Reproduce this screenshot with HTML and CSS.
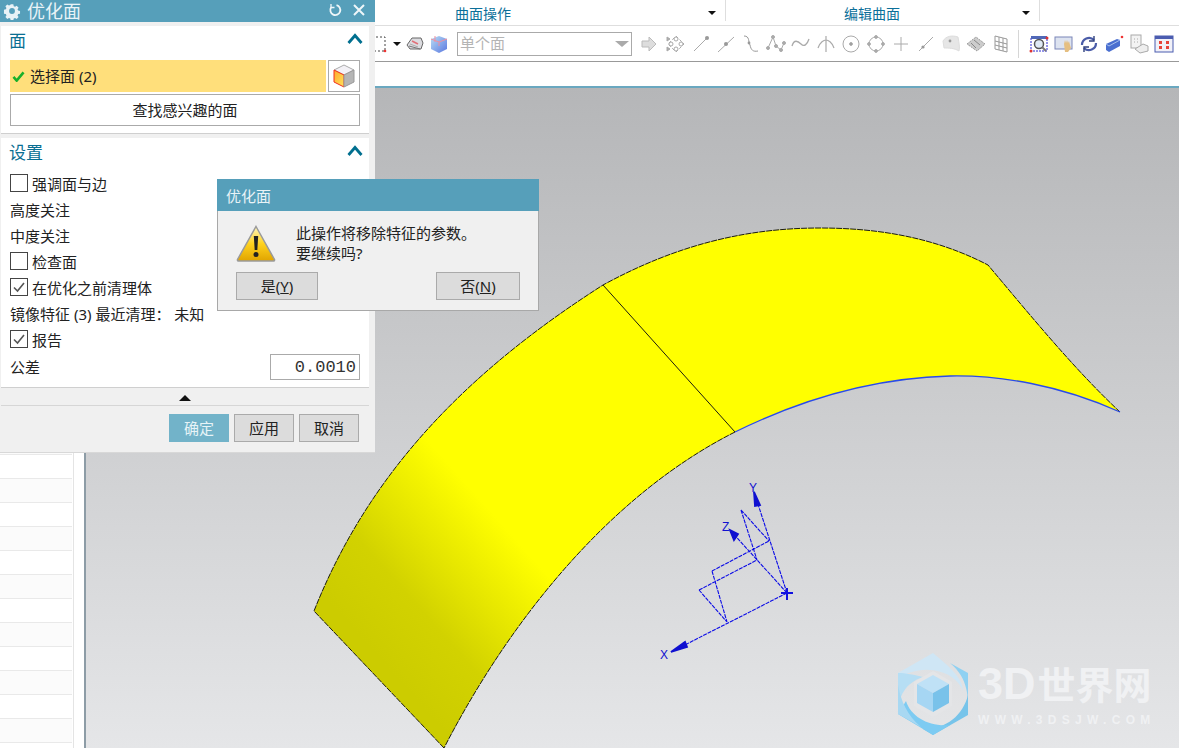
FILE: index.html
```html
<!DOCTYPE html>
<html lang="zh-CN">
<head>
<meta charset="utf-8">
<title>优化面</title>
<link rel="stylesheet" href="styles.css">
</head>
<body>
<div class="app">
  <header class="ribbon">
    <div class="tabs">
      <div class="group group-a"><span class="group-label">曲面操作</span><i class="caret"></i></div>
      <div class="group group-b"><span class="group-label">编辑曲面</span><i class="caret"></i></div>
    </div>
    <div class="tools">
      <svg class="ti" viewBox="0 0 20 20"><rect x="4" y="3" width="13" height="14" fill="none" stroke="#444" stroke-dasharray="2 2"/><circle cx="17" cy="17" r="1.3" fill="#e33"/></svg>
      <i class="caret tool-caret"></i>
      <svg class="ti ti-a" viewBox="0 0 20 20"><path d="M2 11 7 4h9l2 5-2 6H5z" fill="#dcdce0" stroke="#666"/><path d="M7 7l6 3" stroke="#e07078" stroke-width="1.600"/><path d="M4 12l11 3" stroke="#777"/><path d="M5 10l8 3" stroke="#aaa"/></svg>
      <svg class="ti ti-b" viewBox="0 0 20 20"><defs><linearGradient id="cb" x1="0" y1="0" x2="1" y2="1"><stop offset="0" stop-color="#b9ddf5"/><stop offset="1" stop-color="#5a78e0"/></linearGradient></defs><path d="M2 5l8-3 8 3v10l-8 4-8-4z" fill="url(#cb)"/><path d="M2 5l8 3 8-3M10 8v4M6 2v6" fill="none" stroke="#ef8fa0"/></svg>
      <div class="combo"><span>单个面</span><i class="caret caret-big"></i></div>
      <svg class="ti ti-c" viewBox="0 0 20 20"><path d="M3 7h7V3l7 7-7 7v-4H3z" fill="#ddd" stroke="#bbb"/></svg>
      <svg class="ti ti-d" viewBox="0 0 20 20" fill="none" stroke="#aaa"><path d="M10 2l8 8-8 8-8-8z" stroke-dasharray="3 2"/><circle cx="10" cy="5" r="2"/><circle cx="15" cy="10" r="2"/><circle cx="10" cy="15" r="2"/><circle cx="5" cy="10" r="2"/><path d="M1 3v4l3-2zM1 13v4l3-2z" fill="#aaa"/></svg>
      <svg class="ti" viewBox="0 0 20 20"><path d="M3 17 16 4" stroke="#aaa" fill="none"/><circle cx="16" cy="4" r="2" fill="#999"/></svg>
      <svg class="ti" viewBox="0 0 20 20"><path d="M2 18 18 3" stroke="#aaa" fill="none"/><circle cx="10" cy="10" r="2" fill="#999"/></svg>
      <svg class="ti" viewBox="0 0 20 20"><path d="M3 2c6 0 4 6 6 9 1 5 3 7 8 6" stroke="#999" fill="none"/><circle cx="8" cy="9" r="1.400" fill="#999"/></svg>
      <svg class="ti" viewBox="0 0 20 20" fill="none" stroke="#aaa"><path d="M2 14 7 3l3 9 5 4 3-7"/><circle cx="7" cy="3" r="1.500" fill="#aaa"/><circle cx="2" cy="14" r="1.500" fill="#aaa"/><circle cx="10" cy="12" r="1.500" fill="#aaa"/><circle cx="15" cy="16" r="1.500" fill="#aaa"/><circle cx="18" cy="9" r="1.500" fill="#aaa"/></svg>
      <svg class="ti" viewBox="0 0 20 20" fill="none" stroke="#aaa"><path d="M1 12c2-7 6-5 9-2s6 1 8-5" stroke-width="1.300"/></svg>
      <svg class="ti" viewBox="0 0 20 20" fill="none" stroke="#aaa"><path d="M2 14C4 8 8 6 10 6s6 2 8 8M10 2v16" stroke-width="1.200"/></svg>
      <svg class="ti" viewBox="0 0 20 20" fill="none" stroke="#aaa"><circle cx="10" cy="10" r="8"/><circle cx="10" cy="10" r="1.400" fill="#999"/></svg>
      <svg class="ti" viewBox="0 0 20 20" fill="none" stroke="#aaa"><circle cx="10" cy="10" r="7"/><circle cx="10" cy="3" r="1.400" fill="#aaa"/><circle cx="10" cy="17" r="1.400" fill="#aaa"/><circle cx="3" cy="10" r="1.400" fill="#aaa"/><circle cx="17" cy="10" r="1.400" fill="#aaa"/></svg>
      <svg class="ti" viewBox="0 0 20 20"><path d="M10 3v14M3 10h14" stroke="#aaa" fill="none"/></svg>
      <svg class="ti" viewBox="0 0 20 20"><path d="M3 17 17 3" stroke="#aaa" fill="none"/><circle cx="7" cy="13" r="1.600" fill="#999"/></svg>
      <svg class="ti" viewBox="0 0 20 20"><path d="M2 7c3-5 9-6 15-4 1 6 2 10 1 14-5-3-10-3-15-3z" fill="#e6e6e6" stroke="#ddd"/><circle cx="9" cy="7" r="1.400" fill="#999"/></svg>
      <svg class="ti" viewBox="0 0 20 20"><path d="M1 10 10 3l9 7-8 7z" fill="#ccc" stroke="#999" stroke-dasharray="2 1"/><path d="M5 9l5 5M8 6l6 5" stroke="#888"/></svg>
      <svg class="ti" viewBox="0 0 20 20" fill="none" stroke="#999"><path d="M4 2l12 3v13L4 15zM8 3v13M12 4v13M4 7l12 3M4 11l12 3"/></svg>
      <span class="tool-sep"></span>
      <svg class="ti ti-e" viewBox="0 0 20 20"><rect x="2" y="3" width="16" height="14" fill="#fff" stroke="#2a2ad0" stroke-dasharray="2 1"/><rect x="2" y="2" width="16" height="3" fill="#5068b8"/><circle cx="10" cy="10" r="4.500" fill="#dfeaf5" stroke="#555" stroke-width="1.500"/><path d="M13 13l4 4" stroke="#777" stroke-width="2"/><circle cx="18" cy="4" r="1.500" fill="#d33"/><circle cx="2" cy="17" r="1.500" fill="#d33"/></svg>
      <svg class="ti" viewBox="0 0 20 20"><rect x="1" y="3" width="17" height="12" fill="#dde3f0" stroke="#7b86b8"/><path d="M10 10l1-4 1 3 1-3 1 3 1-2 1 4 1 3-3 4h-3z" fill="#e5bf82"/></svg>
      <svg class="ti" viewBox="0 0 20 20" fill="none" stroke-width="2.200"><path d="M3 11a7 7 0 0 1 12-5" stroke="#4a5ca8"/><path d="M17 9a7 7 0 0 1-12 5" stroke="#4a5ca8"/><path d="M15 2v5h-5" stroke="#30407f" stroke-width="1.400"/><path d="M5 18v-5h5" stroke="#30407f" stroke-width="1.400"/></svg>
      <svg class="ti" viewBox="0 0 20 20"><path d="M2 10l11-5 3 1v6L5 18l-3-2z" fill="#4a6fd0"/><path d="M2 10l3 2 11-6" fill="none" stroke="#a7c0ee"/><circle cx="18" cy="3" r="1.300" fill="#e33"/></svg>
      <svg class="ti" viewBox="0 0 20 20" fill="none" stroke="#aaa"><rect x="2" y="1" width="10" height="13" fill="#f3f3f3"/><path d="M5 5h1M8 5h1M5 8h1M8 8h1"/><path d="M6 15l8-5 5 2v5l-8 2z" fill="#eee"/></svg>
      <svg class="ti" viewBox="0 0 20 20"><rect x="1" y="2" width="18" height="16" fill="#f1f1f8" stroke="#4b5cb0"/><rect x="1" y="2" width="18" height="3" fill="#4b5cb0"/><path d="M5 7h3v3H5zM12 7h3v3h-3zM5 12h3v3H5zM12 12h3v3h-3z" fill="#e8433a"/></svg>
    </div>
    <div class="subbar"></div>
  </header>

  <main class="workspace">
    <aside class="sidebar">
      <div class="list">
        <div class="list-row"></div><div class="list-row"></div><div class="list-row"></div><div class="list-row"></div><div class="list-row"></div><div class="list-row"></div><div class="list-row"></div><div class="list-row"></div><div class="list-row"></div><div class="list-row"></div><div class="list-row"></div><div class="list-row"></div><div class="list-row"></div><div class="list-row"></div><div class="list-row"></div><div class="list-row"></div><div class="list-row"></div><div class="list-row"></div><div class="list-row"></div><div class="list-row"></div><div class="list-row"></div><div class="list-row"></div><div class="list-row"></div><div class="list-row"></div><div class="list-row"></div><div class="list-row"></div><div class="list-row"></div><div class="list-row"></div>
      </div>
    </aside>
    <section class="canvas">
      <svg class="scene" viewBox="86 88 1093 660">
        <defs>
          <linearGradient id="shade" gradientUnits="userSpaceOnUse" x1="350" y1="625" x2="485" y2="505">
            <stop offset="0" stop-color="#cccc00"/>
            <stop offset="0.35" stop-color="#d2d200"/>
            <stop offset="1" stop-color="#ffff00"/>
          </linearGradient>
        </defs>
        <path d="M314 611C370 470 470 370 603 285C680 243 750 228 820 228C885 228 940 240 988 265C1030 315 1075 370 1120 412C1060 385 1000 375 950 376C870 378 800 400 735 432C610 495 510 620 444 748L314 611Z" fill="url(#shade)"/>
        <path d="M444 748 314 611C370 470 470 370 603 285C680 243 750 228 820 228C885 228 940 240 988 265C1030 315 1075 370 1120 412M735 432C610 495 510 620 444 748" fill="none" stroke="#1c1c10" stroke-width="1" stroke-dasharray="6 1"/>
        <path d="M603 285 735 432" fill="none" stroke="#1c1c10" stroke-width="1"/>
        <path d="M1120 412C1060 385 1000 375 950 376C870 378 800 400 735 432" fill="none" stroke="#2a4be8" stroke-width="1.300"/>
        <g fill="none" stroke="#0a0ae6" stroke-width="1.100" stroke-dasharray="4 1">
          <path d="M787 593 754 492M787 593 730 530M787 593 671 652"/>
          <path d="M699 590 727 622M699 590 757 560M712 571 727 622M712 571 769 541M741 510 769 541M741 510 757 560"/>
        </g>
        <path d="M754 492 760 505 755 506ZM730 530 738 534 734 540ZM671 652 685 642 687 647Z" fill="#1010d0" stroke="#1010d0" stroke-width="1.800"/>
        <path d="M781 593H793M787 588V600" stroke="#1010e0" stroke-width="2"/>
        <text class="axis" x="749" y="492">Y</text>
        <text class="axis" x="722" y="531">Z</text>
        <text class="axis" x="660" y="659">X</text>
      </svg>
      <div class="watermark">
        <svg class="wm-logo" viewBox="0 0 72 82">
          <path d="M36 0 1 20 1 26C12 18 28 14 44 19 54 22 62 28 66 38 66 24 50 12 36 0Z" fill="#cfe6f5"/>
          <path d="M53 10 71 20V61C71 44 72 26 53 10Z" fill="#8fd1f2"/>
          <path d="M71 42V62L36 82 26 76C50 76 66 62 71 42Z" fill="#77c4ea"/>
          <path d="M1 61 36 82 53 72C32 74 14 64 9 48Z" fill="#7dcbf2"/>
          <path d="M1 20V61C1 44 8 30 26 24 18 22 8 20 1 20Z" fill="#b6def4"/>
          <path d="M1 32V61L24 74C10 62 4 48 1 32Z" fill="#a8d8f2"/>
          <path d="M36 18 55 29V53L36 64 17 53V29Z" fill="#e4e5e7"/>
          <path d="M36 22 52 31 36 40 20 31Z" fill="#bfe1f6"/>
          <path d="M20 31 36 40V59L20 50Z" fill="#a6d6f3"/>
          <path d="M52 31V50L36 59V40Z" fill="#79c2ea"/>
        </svg>
        <div class="wm-text">
          <div class="wm-name"><span class="wm-3d">3D</span>世界网</div>
          <div class="wm-url">WWW.3DSJW.COM</div>
        </div>
      </div>
    </section>
  </main>

  <div class="dialog">
    <div class="dlg-title">
      <svg class="gear" viewBox="0 0 16 16"><path d="M6.600 1h2.800l.4 2 1.400.6 1.700-1.100 2 2-1.100 1.700.6 1.400 2 .4v2.800l-2 .4-.6 1.400 1.100 1.700-2 2-1.700-1.100-1.400.6-.4 2H6.600l-.4-2-1.400-.6-1.700 1.100-2-2 1.100-1.700-.6-1.400-2-.4V6.600l2-.4.6-1.400-1.100-1.700 2-2 1.700 1.100 1.400-.6z" fill="#e8f2f6" transform="translate(1.200 1.200) scale(.85)"/><circle cx="8" cy="8" r="2.600" fill="#569fba"/></svg>
      <span class="dlg-title-text">优化面</span>
      <svg class="dlg-btn" viewBox="0 0 14 14" fill="none" stroke="#eef6f9" stroke-width="1.800"><path d="M8.500 2.200A5 5 0 1 1 3 4.500"/><path d="M3 1v3.500h3.500" stroke-width="1.300"/></svg>
      <svg class="dlg-btn" viewBox="0 0 14 14" fill="none" stroke="#eef6f9" stroke-width="2"><path d="M2 2l10 10M12 2 2 12"/></svg>
    </div>

    <section class="panel panel-face">
      <div class="panel-head"><span>面</span><svg class="chev" viewBox="0 0 16 11"><path d="M1.500 10 8 2.500l6.500 7.500" fill="none" stroke="#006f8f" stroke-width="2.800"/></svg></div>
      <div class="select-row">
        <div class="select-field">
          <svg class="tick" viewBox="0 0 14 12"><path d="M1.500 6.500 5 10.500 12.500 1.500" fill="none" stroke="#18b02a" stroke-width="2.800"/></svg>
          <span>选择面 (2)</span>
        </div>
        <button class="cube-btn">
          <svg viewBox="0 0 22 24"><defs><linearGradient id="cf" x1="0" y1="0" x2="1" y2="1"><stop offset="0" stop-color="#ffa92e"/><stop offset="1" stop-color="#ffe45a"/></linearGradient></defs><path d="M11 1 21 6 11 11 1 6Z" fill="#f3f1f6" stroke="#aaa"/><path d="M1 6 11 11V23L1 18Z" fill="url(#cf)" stroke="#f03020"/><path d="M21 6V18L11 23V11Z" fill="#b5b5b5" stroke="#999"/></svg>
        </button>
      </div>
      <button class="wide-btn">查找感兴趣的面</button>
    </section>

    <section class="panel panel-settings">
      <div class="panel-head"><span>设置</span><svg class="chev" viewBox="0 0 16 11"><path d="M1.500 10 8 2.500l6.500 7.500" fill="none" stroke="#006f8f" stroke-width="2.800"/></svg></div>
      <div class="row"><i class="check"></i><span>强调面与边</span></div>
      <div class="row">高度关注</div>
      <div class="row">中度关注</div>
      <div class="row"><i class="check"></i><span>检查面</span></div>
      <div class="row"><i class="check on"><svg viewBox="0 0 16 16"><path d="M3 8.500 6.500 12 13 4" fill="none" stroke="#555" stroke-width="1.600"/></svg></i><span>在优化之前清理体</span></div>
      <div class="row">镜像特征 (3) 最近清理：&nbsp;未知</div>
      <div class="row"><i class="check on"><svg viewBox="0 0 16 16"><path d="M3 8.500 6.500 12 13 4" fill="none" stroke="#555" stroke-width="1.600"/></svg></i><span>报告</span></div>
      <div class="row row-between"><span class="tol-label">公差</span><div class="num-input">0.0010</div></div>
    </section>

    <div class="collapse"><i class="caret caret-up"></i></div>
    <div class="actions">
      <button class="btn primary">确定</button>
      <button class="btn">应用</button>
      <button class="btn">取消</button>
    </div>
  </div>

  <div class="msgbox">
    <div class="msg-title">优化面</div>
    <div class="msg-body">
      <svg class="warn" viewBox="0 0 40 37">
        <defs><linearGradient id="wg" x1="0" y1="0" x2="0" y2="1"><stop offset="0" stop-color="#fff6c0"/><stop offset=".5" stop-color="#ffd21e"/><stop offset="1" stop-color="#e0a400"/></linearGradient></defs>
        <path d="M20 1.500 38.500 34.500Q39 36 37 36H3Q1 36 1.500 34.500Z" fill="url(#wg)" stroke="#9a9a9a" stroke-width="1.500"/>
        <path d="M17.800 11h4.400l-.9 14h-2.600z" fill="#222"/><circle cx="20" cy="29.500" r="2.500" fill="#222"/>
      </svg>
      <p class="msg-text">此操作将移除特征的参数。<br>要继续吗?</p>
    </div>
    <div class="msg-actions">
      <button class="btn msg-yes">是(<u>Y</u>)</button>
      <button class="btn msg-no">否(<u>N</u>)</button>
    </div>
  </div>
</div>
</body>
</html>
```

FILE: styles.css
```css
* { box-sizing: border-box; }
html, body { margin: 0; padding: 0; }
body {
  width: 1179px;
  height: 748px;
  overflow: hidden;
  font-family: "Noto Sans", "Noto Sans CJK SC", sans-serif;
  font-size: 15px;
  color: #222;
  background: #fff;
}
.app {
  position: relative;
  width: 1179px;
  height: 748px;
  display: flex;
  flex-direction: column;
  overflow: hidden;
}

/* ribbon */
.ribbon { flex: none; background: #fff; }
.tabs {
  height: 26px;
  display: flex;
  padding-left: 375px;
  border-bottom: 1px solid #dedede;
}
.group {
  height: 21px;
  display: flex;
  align-items: center;
  border-right: 1px solid #dedede;
  padding-right: 9px;
}
.group-a { width: 351px; padding-left: 80px; }
.group-b { width: 314px; padding-left: 118px; }
.group-label { color: #0b6f99; font-size: 14px; line-height: 21px; padding-top: 6px; }
.group .caret { margin-left: auto; margin-top: 5px; }
.caret {
  display: block;
  width: 0;
  height: 0;
  border-left: 4px solid transparent;
  border-right: 4px solid transparent;
  border-top: 4px solid #111;
}
.tools {
  height: 36px;
  display: flex;
  align-items: center;
  gap: 5px;
  padding-left: 368px;
  border-bottom: 1px solid #999;
}
.ti { flex: none; width: 20px; height: 20px; display: block; }
.tool-caret { margin-right: 2px; }
.ti-a { margin-left: -3px; }
.ti-b { margin-left: -1px; }
.ti-c { margin-left: 2px; }
.ti-d { margin-left: 2px; }
.ti-e { margin-left: 5px; }
.combo {
  flex: none;
  margin-left: 3px;
  width: 175px;
  height: 24px;
  border: 1px solid #aaa;
  display: flex;
  align-items: center;
  justify-content: space-between;
  padding: 0 2px 2px 2px;
  color: #b4b4b4;
  font-size: 15px;
}
.caret-big {
  border-left-width: 7px;
  border-right-width: 7px;
  border-top: 6px solid #aaa;
  margin-top: 2px;
}
.tool-sep {
  flex: none;
  width: 1px;
  height: 28px;
  margin-left: 2px;
  background: #d6d6d6;
}
.subbar {
  height: 26px;
  border-bottom: 2px solid #6aa8c0;
}

/* workspace */
.workspace { flex: 1; display: flex; min-height: 0; }
.sidebar {
  flex: none;
  width: 86px;
  padding: 7px 10px 0 0;
  background: #fff;
  border-right: 2px solid #8d9ca6;
  overflow: hidden;
}
.list { border-right: 1px solid #e4e4e4; padding-right: 1px; }
.list-row { height: 24px; border-bottom: 1px solid #e9e9e9; background: #fbfbfb; }
.list-row:nth-child(even) { background: #fff; }
.canvas {
  position: relative;
  flex: 1;
  background: linear-gradient(#b5b6b8, #e5e6e8);
  overflow: hidden;
}
.scene { display: block; width: 100%; height: 100%; }
.axis { font-family: "Liberation Sans", sans-serif; font-size: 12px; fill: #1010d0; }

/* watermark */
.watermark {
  position: absolute;
  left: 811px;
  top: 565px;
  display: flex;
  gap: 9px;
  align-items: flex-start;
}
.wm-logo { flex: none; width: 72px; height: 82px; display: block; }
.wm-text { padding-top: 8px; }
.wm-name {
  font-family: "Liberation Sans", "Noto Sans CJK SC", sans-serif;
  font-weight: 700;
  font-size: 38px;
  line-height: 46px;
  color: #f0f1f3;
  white-space: nowrap;
}
.wm-3d { font-size: 45px; margin-right: 2px; }
.wm-url {
  font-family: "Liberation Sans", sans-serif;
  font-weight: 700;
  font-size: 12px;
  line-height: 14px;
  margin-top: 4px;
  color: #f0f1f3;
  letter-spacing: 5.300px;
  white-space: nowrap;
}

/* dialog */
.dialog {
  position: absolute;
  left: 0;
  top: 0;
  width: 375px;
  height: 453px;
  background: #f0f0f0;
  border-bottom: 1px solid #d8d8d8;
  display: flex;
  flex-direction: column;
}
.dlg-title {
  flex: none;
  height: 22px;
  background: #569fba;
  display: flex;
  align-items: center;
  padding: 0 9px 0 3px;
  color: #e9f3f7;
}
.gear { width: 18px; height: 18px; margin-right: 6px; display: block; }
.dlg-title-text { font-size: 18px; line-height: 18px; margin-right: auto; }
.dlg-btn { width: 14px; height: 14px; margin-left: 10px; margin-top: -2px; display: block; }
.panel {
  margin: 4px 6px 0 1px;
  background: #fff;
  border-bottom: 1px solid #cfcfcf;
  padding: 0 9px;
}
.panel-face { height: 108px; }
.panel-settings { height: 250px; }
.panel-head {
  height: 30px;
  display: flex;
  align-items: center;
  justify-content: space-between;
  color: #0a6f93;
  font-size: 17px;
  padding-bottom: 4px;
  margin-left: -1px;
  margin-bottom: 4px;
}
.chev { width: 16px; height: 11px; display: block; margin-right: -3px; margin-top: -1px; }
.select-row { display: flex; gap: 2px; height: 32px; margin-bottom: 2px; }
.select-field {
  flex: 1;
  background: #ffdf7b;
  display: flex;
  align-items: center;
  gap: 5px;
  padding: 0 0 2px 2px;
}
.tick { width: 13px; height: 11px; display: block; margin-top: 2px; }
.cube-btn {
  flex: none;
  width: 32px;
  padding: 0;
  background: #fff;
  border: 1px solid #aaa;
  display: flex;
  align-items: center;
  justify-content: center;
}
.cube-btn svg { width: 22px; height: 24px; display: block; }
.wide-btn {
  display: block;
  width: 100%;
  height: 32px;
  background: #fff;
  border: 1px solid #aaa;
  font: inherit;
  color: #222;
  padding: 0 0 1px;
}
.row {
  height: 26px;
  display: flex;
  align-items: center;
  white-space: pre;
  padding-bottom: 4px;
}
.row-between { justify-content: space-between; padding-bottom: 0; }
.tol-label { padding-bottom: 2px; }
.check {
  flex: none;
  display: block;
  width: 18px;
  height: 18px;
  border: 1px solid #444;
  background: #fff;
  margin-right: 4px;
}
.check svg { display: block; width: 16px; height: 16px; }
.num-input {
  width: 90px;
  height: 26px;
  border: 1px solid #aaa;
  background: #fff;
  font-family: "Liberation Mono", monospace;
  font-size: 17px;
  line-height: 25px;
  text-align: right;
  padding: 0 3px 0 0;
  color: #333;
}
.collapse {
  flex: none;
  height: 18px;
  margin: 0 6px 0 1px;
  border-bottom: 1px solid #d6d6d6;
  display: flex;
  align-items: center;
  justify-content: center;
}
.caret-up {
  border-top: 0;
  border-left-width: 6px;
  border-right-width: 6px;
  border-bottom: 6px solid #111;
  margin-left: -1px;
  margin-top: 2px;
}
.actions {
  flex: none;
  display: flex;
  justify-content: flex-end;
  gap: 5px;
  padding: 8px 16px 0 0;
}
.btn {
  height: 28px;
  width: 60px;
  padding: 0 0 2px;
  border: 1px solid #aaa;
  background: #dcdcdc;
  font: inherit;
  color: #222;
  display: block;
}
.btn.primary { background: #72b3c9; border-color: #72b3c9; color: #e7f3f7; }

/* message box */
.msgbox {
  position: absolute;
  left: 217px;
  top: 179px;
  width: 322px;
  height: 132px;
  background: #f0f0f0;
  border: 1px solid #a8a8a8;
  border-top: 0;
}
.msg-title {
  height: 32px;
  margin: 0 -1px;
  background: #569fba;
  color: #e9f3f7;
  font-size: 15px;
  line-height: 34px;
  padding-left: 9px;
}
.msg-body {
  display: flex;
  align-items: flex-start;
  padding: 12px 0 0 18px;
  height: 60px;
}
.warn { flex: none; width: 40px; height: 37px; display: block; margin-top: 2px; margin-right: 20px; }
.msg-text { margin: 0; line-height: 20px; font-size: 15px; }
.msg-actions {
  display: flex;
  justify-content: space-between;
  padding: 1px 18px 0 18px;
}
.msg-yes { width: 82px; }
.msg-no { width: 84px; }
```
